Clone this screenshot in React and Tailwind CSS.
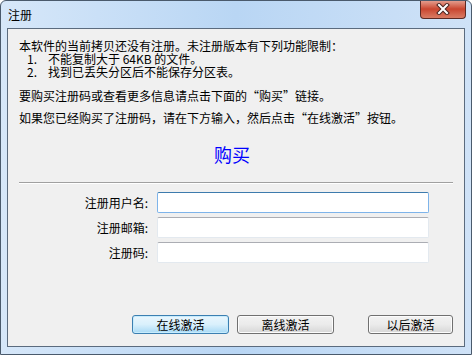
import React from "react";

const font = { fontFamily: '"Noto Sans CJK SC", "Liberation Sans", sans-serif' };

const Field = ({ label, focused }) => (
  <div className="flex items-center h-[21px]">
    <div className="w-[140px] text-right text-[12px] leading-[13px] text-black">{label}:</div>
    <input
      className={
        "ml-[9px] w-[272px] h-[21px] bg-white outline-none border " +
        (focused
          ? "border-[#7eb4ea] border-t-[#3d7bad] rounded-[2px]"
          : "border-[#e3e9ef] border-t-[#abadb3] rounded-[2px]")
      }
    />
  </div>
);

const Btn = ({ children, primary, w }) => (
  <button
    className={
      "h-[19px] text-[12px] leading-[13px] text-black rounded-[3px] border " +
      w +
      " " +
      (primary
        ? "border-[#3c7fb1] bg-gradient-to-b from-[#eaf6fd] via-[#d9f0fc] to-[#a7d9f5] shadow-[inset_0_0_0_1px_#c7ecfd]"
        : "border-[#707070] bg-gradient-to-b from-[#f2f2f2] via-[#ebebeb] to-[#d6d6d6] shadow-[inset_0_0_0_1px_#fcfcfc]")
    }
  >
    {children}
  </button>
);

const App = () => {
  return (
    <div
      style={font}
      className="w-[472px] h-[355px] flex flex-col rounded-t-[6px] border border-[#4a5a6c] bg-gradient-to-r from-[#d6e7f9] via-[#b9d6f4] to-[#cfe2f7] px-[6px] pb-[7px] overflow-hidden"
    >
      <div className="h-[27px] flex items-start justify-between">
        <div className="pl-[1px] pt-[7px] text-[12px] leading-[14px] text-black">注册</div>
        <div className="w-[46px] h-[19px] -mt-[1px] -mr-[1px] rounded-b-[4px] border border-t-0 border-[#5d2a24] bg-gradient-to-b from-[#e5a597] via-[#c9452f] to-[#d97b64] flex items-center justify-center">
          <svg width="14" height="12" viewBox="0 0 14 12">
            <path d="M3 2 L11 10 M11 2 L3 10" stroke="#4a2420" strokeWidth="4" strokeLinecap="square" />
            <path d="M3 2 L11 10 M11 2 L3 10" stroke="#ffffff" strokeWidth="2" strokeLinecap="square" />
          </svg>
        </div>
      </div>
      <div className="flex-1 border border-[#5b6b7e] bg-[#f0f0f0] flex flex-col">
        <div className="pl-[11px] pt-[10px] text-[12px] leading-[13px] text-black">
          <div>本软件的当前拷贝还没有注册。未注册版本有下列功能限制：</div>
          <div className="flex">
            <span className="w-[29px] text-right pr-[11px]">1.</span>
            <span>不能复制大于 64KB 的文件。</span>
          </div>
          <div className="flex">
            <span className="w-[29px] text-right pr-[11px]">2.</span>
            <span>找到已丢失分区后不能保存分区表。</span>
          </div>
          <div className="mt-[11px]">要购买注册码或查看更多信息请点击下面的“购买”链接。</div>
          <div className="mt-[9px]">如果您已经购买了注册码，请在下方输入，然后点击“在线激活”按钮。</div>
        </div>
        <div className="mt-[20px] pr-[8px] text-center text-[18px] leading-[20px] text-[#0000ff] cursor-pointer">购买</div>
        <div className="mt-[18px] mx-[11px] h-[2px] border-t border-[#a0a0a0] border-b border-b-white" />
        <div className="mt-[8px] flex flex-col gap-[4px]">
          <Field label="注册用户名" focused />
          <Field label="注册邮箱" />
          <Field label="注册码" />
        </div>
        <div className="mt-auto mb-[12px] flex pl-[124px]">
          <Btn primary w="w-[97px]">在线激活</Btn>
          <div className="w-[8px]" />
          <Btn w="w-[97px]">离线激活</Btn>
          <div className="w-[34px]" />
          <Btn w="w-[85px]">以后激活</Btn>
        </div>
      </div>
    </div>
  );
};

export default App;
